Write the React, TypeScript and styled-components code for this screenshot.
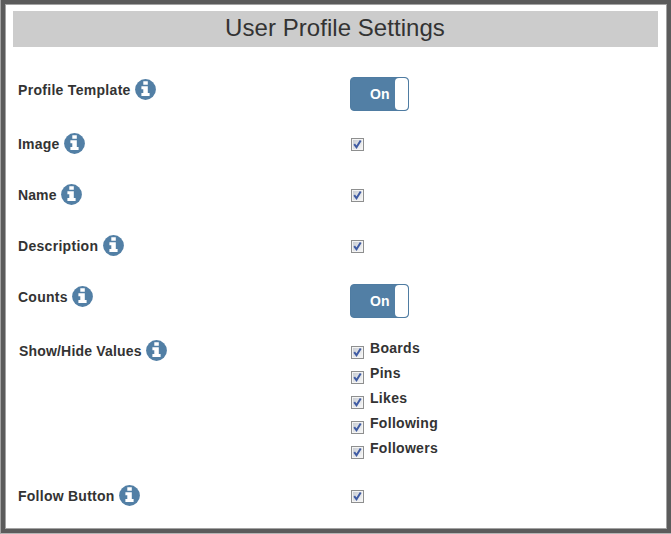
import React from 'react';
import styled, { createGlobalStyle } from 'styled-components';

const GlobalStyle = createGlobalStyle`
  * { box-sizing: border-box; }
  body { margin: 0; background: #fff; overflow: hidden; }
`;

const Frame = styled.div`
  width: 671px;
  height: 534px;
  background: #5b5b5b;
  border-left: 1px solid #a3a3a3;
  border-bottom: 1px solid #b5b5b5;
  padding: 4px;
  font-family: "Liberation Sans", Arial, sans-serif;
  color: #333;
`;

const Panel = styled.main`
  width: 662px;
  height: 525px;
  border: 1px solid #a3a3a3;
  background: #fff;
  padding: 6px 8px 0 7px;
`;

const Title = styled.h1`
  margin: 0 0 30px;
  padding-right: 1px;
  height: 36px;
  background: #ccc;
  font-size: 24px;
  font-weight: 400;
  line-height: 34px;
  letter-spacing: 0.05px;
  text-align: center;
`;

const Row = styled.div<{ $height: number }>`
  display: grid;
  grid-template-columns: 332px 1fr;
  align-items: start;
  height: ${(p) => p.$height}px;
  padding-left: 5px;
`;

const Label = styled.div<{ $spacing: number; $inset: number }>`
  display: flex;
  align-items: flex-start;
  gap: 4px;
  height: 21px;
  margin-top: 2px;
  padding-left: ${(p) => p.$inset}px;
  font-size: 14px;
  font-weight: 700;
  line-height: 23px;
  letter-spacing: ${(p) => p.$spacing}px;
  white-space: nowrap;
`;

const LabelText = styled.span<{ $width: number }>`
  width: ${(p) => p.$width}px;
`;

const Info = styled.svg`
  display: block;
  flex: none;
  width: 21px;
  height: 21px;
`;

const Switch = styled.button`
  display: flex;
  justify-content: flex-end;
  align-items: stretch;
  width: 59px;
  height: 34px;
  padding: 0;
  border: 1px solid #4f7ca2;
  border-radius: 4px;
  background: #527fa5;
  color: #fff;
  font: 700 14px/32px "Liberation Sans", Arial, sans-serif;
`;

const SwitchText = styled.span`
  width: 25px;
  text-align: left;
  letter-spacing: 0.2px;
`;

const Knob = styled.span`
  width: 13px;
  border-radius: 4px;
  background: #fff;
`;

const CheckSlot = styled.div`
  padding: 7px 0 0 1px;
`;

const Box = styled.svg`
  display: block;
  flex: none;
  width: 13px;
  height: 13px;
`;

const Options = styled.div`
  display: flex;
  flex-direction: column;
  padding-left: 1px;
`;

const Option = styled.label`
  display: flex;
  gap: 6px;
  height: 25px;
  padding-top: 8px;
`;

const OptionText = styled.span`
  margin-top: -8px;
  font-size: 14px;
  font-weight: 700;
  line-height: 20px;
  letter-spacing: 0.3px;
`;

const InfoIcon = () => (
  <Info viewBox="0 0 21 21">
    <circle cx="10.5" cy="10.5" r="10.4" fill="#527fa5" />
    <path fill="#fff" d="M8.3 2.2h4.5v3.6H8.3zM6.4 7.3h6.4v6.8h1.8v3H6.4v-3h1.9v-3.8H6.4z" />
  </Info>
);

const Check = () => (
  <Box viewBox="0 0 13 13">
    <defs>
      <linearGradient id="box-fill" x1="0" y1="0" x2="1" y2="1">
        <stop offset="0" stopColor="#c9cdd3" />
        <stop offset="1" stopColor="#f6f6f6" />
      </linearGradient>
    </defs>
    <rect x="0.5" y="0.5" width="12" height="12" fill="#f4f4f4" stroke="#8e8f8f" />
    <rect x="2" y="2" width="9" height="9" fill="url(#box-fill)" />
    <path d="M3.2 6.2 5.5 9.3 9.7 2.4" fill="none" stroke="#3f5ba3" strokeWidth="2" />
  </Box>
);

const Toggle = () => (
  <Switch type="button" role="switch" aria-checked="true">
    <SwitchText>On</SwitchText>
    <Knob />
  </Switch>
);

type Setting = {
  label: string;
  width: number;
  spacing: number;
  inset?: number;
  height: number;
  control: 'toggle' | 'check' | 'options';
};

const settings: Setting[] = [
  { label: 'Profile Template', width: 113, spacing: 0.3, height: 54, control: 'toggle' },
  { label: 'Image', width: 42, spacing: 0.2, height: 51, control: 'check' },
  { label: 'Name', width: 39, spacing: 0.1, height: 51, control: 'check' },
  { label: 'Description', width: 81, spacing: 0.3, height: 51, control: 'check' },
  { label: 'Counts', width: 50, spacing: 0.25, height: 54, control: 'toggle' },
  { label: 'Show/Hide Values', width: 123, spacing: 0.18, inset: 1, height: 145, control: 'options' },
  { label: 'Follow Button', width: 97, spacing: 0.25, height: 40, control: 'check' },
];

const counts = ['Boards', 'Pins', 'Likes', 'Following', 'Followers'];

export default function App() {
  return (
    <>
      <GlobalStyle />
      <Frame>
        <Panel>
          <Title>User Profile Settings</Title>
          {settings.map((s) => (
            <Row key={s.label} $height={s.height}>
              <Label $spacing={s.spacing} $inset={s.inset ?? 0}>
                <LabelText $width={s.width}>{s.label}</LabelText>
                <InfoIcon />
              </Label>
              {s.control === 'toggle' && <Toggle />}
              {s.control === 'check' && (
                <CheckSlot>
                  <Check />
                </CheckSlot>
              )}
              {s.control === 'options' && (
                <Options>
                  {counts.map((c) => (
                    <Option key={c}>
                      <Check />
                      <OptionText>{c}</OptionText>
                    </Option>
                  ))}
                </Options>
              )}
            </Row>
          ))}
        </Panel>
      </Frame>
    </>
  );
}
